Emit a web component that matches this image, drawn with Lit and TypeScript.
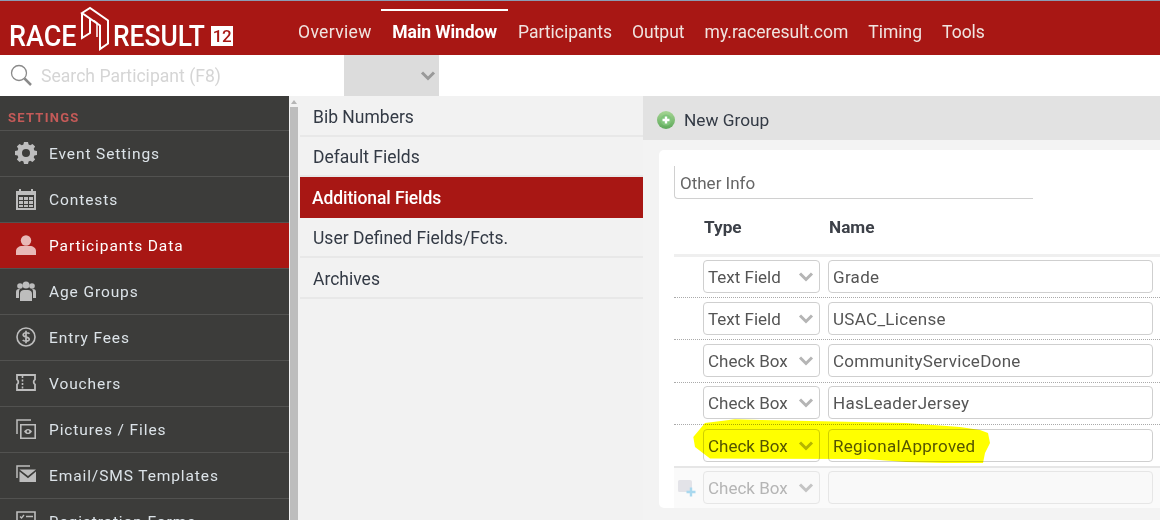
import { LitElement, html, css, svg } from "lit";
import { customElement } from "lit/decorators.js";

const chevron = html`<svg class="chev" width="16" height="10" viewBox="0 0 16 10"><path d="M2 1.500 8 7.500 14 1.500" fill="none" stroke="currentColor" stroke-width="3"/></svg>`;

const icons: Record<string, unknown> = {
  gear: svg`<path fill-rule="evenodd" d="M8 0h4l.6 2.6 1.6.7 2.3-1.4 2.6 2.6-1.4 2.3.7 1.6L21 9v4l-2.6.6-.7 1.6 1.4 2.3-2.6 2.6-2.3-1.4-1.6.7L12 22H8l-.6-2.6-1.6-.7-2.3 1.4-2.6-2.6 1.4-2.3-.7-1.6L-1 13V9l2.6-.6.7-1.6L.9 4.500l2.6-2.6 2.3 1.4 1.6-.7zM10 7a4 4 0 1 0 0 8 4 4 0 0 0 0-8z" transform="translate(0 -1)"/>`,
  cal: svg`<path fill-rule="evenodd" d="M0 2h3V0h2v2h10V0h2v2h3v19H0zM2 6v13h16V6z"/><path d="M3 8h4v3H3zM8 8h4v3H8zM13 8h4v3h-4zM3 12h4v3H3zM8 12h4v3H8zM13 12h4v3h-4zM3 16h4v2H3zM8 16h4v2H8zM13 16h4v2h-4z"/>`,
  user: svg`<circle cx="10" cy="5.500" r="5.200"/><path d="M0 20v-4c0-3 3-5 6-5h8c3 0 6 2 6 5v4z"/>`,
  group: svg`<circle cx="4" cy="5" r="2.800"/><circle cx="16" cy="5" r="2.800"/><circle cx="10" cy="4" r="3.500"/><path d="M0 17v-6c0-2 1-3 3-3h1c-1 1-1 2-1 4v5zM20 17v-6c0-2-1-3-3-3h-1c1 1 1 2 1 4v5zM4 20v-7c0-3 2-4 4-4h4c2 0 4 1 4 4v7z"/>`,
  fee: svg`<circle cx="10" cy="10" r="9" fill="none" stroke="currentColor" stroke-width="1.600"/><path d="M13.500 6.800c-1-1.200-5.800-1.800-6.300.8-.5 3 6.300 1.800 6 4.800-.3 2.400-5.200 2-6.500.6M10 3.800v12.400" fill="none" stroke="currentColor" stroke-width="1.700"/>`,
  voucher: svg`<path d="M1 2h18v4.500a3 3 0 0 0 0 5V17H1v-5.500a3 3 0 0 0 0-5z" fill="none" stroke="currentColor" stroke-width="1.800"/><path d="M6.500 3v14" stroke="currentColor" stroke-width="1.600" stroke-dasharray="2 1.500"/>`,
  pics: svg`<path d="M1 15V1h14" fill="none" stroke="currentColor" stroke-width="1.500"/><path d="M4.800 5.800h14.400v13.400H4.800z" fill="none" stroke="currentColor" stroke-width="1.600"/><path d="M8 12.500c2-3.400 6-3.400 8 0-2 3.400-6 3.400-8 0z"/><circle cx="12" cy="12.500" r="1.200" fill="#3c3c3a"/>`,
  mail: svg`<path d="M1 13V1h13" fill="none" stroke="currentColor" stroke-width="1.500"/><path d="M3.500 4.500h16.500L12 11zM3.500 6.500 12 13.300 20 6.500V17H3.500z"/>`,
  forms: svg`<path d="M1 1h18v18H1z" fill="none" stroke="currentColor" stroke-width="1.600"/><path d="M4 5.500l1.500 1.500L8 4M10 5.500h7M4 11l1.500 1.500L8 9.500M10 11h7" fill="none" stroke="currentColor" stroke-width="1.300"/>`,
};

const sidebar = [
  ["gear", "Event Settings"],
  ["cal", "Contests"],
  ["user", "Participants Data", true],
  ["group", "Age Groups"],
  ["fee", "Entry Fees"],
  ["voucher", "Vouchers"],
  ["pics", "Pictures / Files"],
  ["mail", "Email/SMS Templates"],
  ["forms", "Registration Forms"],
] as [string, string, boolean?][];

const nav = ["Overview", "Main Window", "Participants", "Output", "my.raceresult.com", "Timing", "Tools"];
const mid = ["Bib Numbers", "Default Fields", "Additional Fields", "User Defined Fields/Fcts.", "Archives"];
const rows = [
  ["Text Field", "Grade"],
  ["Text Field", "USAC_License"],
  ["Check Box", "CommunityServiceDone"],
  ["Check Box", "HasLeaderJersey"],
  ["Check Box", "RegionalApproved"],
];

@customElement("app-root")
export class AppRoot extends LitElement {
  static styles = css`
    :host { display: block; width: 1160px; height: 520px; overflow: hidden; position: relative; background: #fff;
      font-family: Roboto, "Noto Sans", sans-serif; }
    * { box-sizing: border-box; }
    .top { height: 55px; background: #a81714; border-top: 1px solid #8b9cb4; display: flex; align-items: stretch; }
    .logo { width: 298px; flex: none; padding-left: 9px; display: flex; align-items: flex-start; color: #fff; }
    .logo .word { font-size: 29px; line-height: 34px; margin-top: 18px; font-weight: 500; display: inline-block; transform-origin: left center; white-space: nowrap; }
    .logo .race { width: 71px; transform: scaleX(.93); }
    .logo .result { width: 98px; margin-left: 3px; transform: scaleX(.91); }
    .logo svg { flex: none; margin: 4px 0 0 0; }
    .logo .badge { flex: none; margin: 25px 0 0 0; width: 22px; height: 20px; background: #fff; color: #a81714; font-size: 17px; font-weight: 500; line-height: 21px; text-align: center; letter-spacing: -.5px; }
    .nav { display: flex; }
    .nav span { display: block; color: #f0e4e0; font-size: 17.500px; line-height: 20px; padding: 11px 10px 0; border-top: 2px solid transparent; margin-top: 8px; white-space: nowrap; height: 44px; }
    .nav span:first-child { padding-left: 0; padding-right: 9.500px; letter-spacing: .35px; }
    .nav span.on { color: #fff; font-weight: 700; border-top-color: #fff; padding-left: 11px; padding-right: 11px; letter-spacing: -.1px; }
    .search { height: 41px; display: flex; }
    .search .box { width: 344px; display: flex; align-items: center; padding: 1px 0 0 10px; color: #d5d5d5; font-size: 17.600px; gap: 8px; }
    .search .box svg { color: #8a8a8a; flex: none; margin-top: -2px; }
    .search .sel { width: 95px; background: #dcdcdc; color: #999; display: flex; justify-content: flex-end; align-items: center; padding-right: 3px; }
    .main { display: flex; height: 424px; }
    .side { width: 289px; flex: none; background: #3c3c3a; overflow: hidden; }
    .side h4 { margin: 0; height: 34.500px; padding: 14px 0 0 8px; font-size: 13px; line-height: 16px; font-weight: 700; letter-spacing: 1.250px; color: #c45a58; border-bottom: 1px solid #525250; }
    .item { height: 46px; display: flex; align-items: center; padding: 1px 0 0 16px; border-bottom: 1px solid #525250; color: #dce3e8; font-size: 15.500px; letter-spacing: .9px; gap: 13px; white-space: nowrap; }
    .item svg { flex: none; color: #bdbdbd; margin-top: -1px; }
    .item.on { background: #a81714; color: #fff; }
    .item.on svg { color: #e8b9b7; }
    .scroll { width: 11px; flex: none; background: #f2f2f2; padding: 0 2px 0 1px; display: flex; flex-direction: column; }
    .scroll .up { height: 11px; display: flex; justify-content: center; align-items: center; }
    .scroll .up i { border: 3px solid transparent; border-top: 0; border-bottom: 4px solid #b5b5b5; }
    .scroll .th { flex: 1; background: #bdbdbd; }
    .mid { width: 343px; flex: none; background: #f2f2f2; }
    .mid div { height: 40.500px; display: flex; align-items: center; padding: 3px 0 0 13px; font-size: 17.500px; color: #333a45; border-bottom: 2px solid #e8e8e8; white-space: nowrap; }
    .mid div.on { background: #a81714; color: #fff; border-bottom: none; padding-left: 12px; padding-top: 1px; font-weight: 500; letter-spacing: -.1px; }
    .right { flex: 1; background: #f3f3f3; min-width: 0; }
    .rh { height: 44px; background: #e2e2e2; display: flex; align-items: center; padding: 3px 0 0 14px; gap: 9px; font-size: 17.300px; color: #333a45; }
    .card { margin: 10px 0 0 16px; background: #fff; border-radius: 5px 0 0 5px; padding: 16px 7px 4px 15px; height: 358px; position: relative; }
    .title { width: 359px; height: 33px; border-left: 1px solid #d0d0d0; border-bottom: 1px solid #d0d0d0; border-radius: 0 0 0 4px; padding-left: 5px; font-size: 17px; line-height: 34px; color: #666; }
    .heads { display: flex; height: 55px; padding: 16px 0 0 30px; font-weight: 700; font-size: 17.200px; color: #3c4048; line-height: 24px; }
    .heads span:first-child { width: 125px; }
    .rule { border-top: 3px solid #efefef; margin-right: -7px; }
    .row { display: flex; height: 42px; padding: 4px 7px 0 29px; gap: 8px; border-bottom: 1px dotted #aaa; margin-right: -7px; }
    .row.r0 { height: 41px; padding-top: 3px; }
    .row.r2 { height: 43px; }
    .row.r3 { padding-top: 3px; }
    .row.r4 { height: 43px; border-bottom: 2px solid #e6e6e6; }
    .select { width: 117px; height: 33px; border: 1px solid #cfcfcf; border-radius: 4px; padding: 0 5px 0 4px; display: flex; align-items: center; justify-content: space-between; font-size: 17px; color: #555; background: #fff; flex: none; }
    .select .chev { color: #b5b5b5; }
    .input { flex: 1; height: 33px; border: 1px solid #cfcfcf; border-radius: 4px; padding-left: 4px; display: flex; align-items: center; font-size: 17px; color: #555; background: #fff; letter-spacing: .3px; }
    .new { display: flex; height: 40px; margin-right: -7px; padding: 3px 7px 0 2px; background: #fafafa; }
    .new svg.add { flex: none; margin: 9px 7px 0 2px; }
    .new .select { background: #f9f9f9; border-color: #e6e6e6; color: #b5b5b5; }
    .new .select .chev { color: #c4c4c4; }
    .new .input { background: #f9f9f9; border-color: #e6e6e6; margin-left: 8px; }
    .mark { position: absolute; left: 693px; top: 419px; mix-blend-mode: multiply; pointer-events: none; }
  `;

  private renderRow(r: string[], i: number) {
    return html`<div class="row r${i}">
      <div class="select">${r[0]}${chevron}</div>
      <div class="input">${r[1]}</div>
    </div>`;
  }

  render() {
    return html`
      <div class="top">
        <div class="logo">
          <span class="word race">RACE</span>
          <svg width="30" height="46" viewBox="0 0 30 46" fill="none" stroke="#fff" stroke-width="2" stroke-linejoin="miter">
            <path d="M2 8 10 3 28 15.500V38.500L20 44V20.500Z"/>
            <path d="M2 8V33L10 28V13"/>
            <path d="M14 15.500 17 18V32" stroke-width="1.500"/>
          </svg>
          <span class="word result">RESULT</span>
          <span class="badge">12</span>
        </div>
        <div class="nav">${nav.map((n) => html`<span class=${n === "Main Window" ? "on" : ""}>${n}</span>`)}</div>
      </div>
      <div class="search">
        <div class="box">
          <svg width="23" height="23" viewBox="0 0 23 23" fill="none" stroke="currentColor"><circle cx="9" cy="9" r="7.500" stroke-width="1.300"/><path d="M14.500 14.500 21 21" stroke-width="2.500"/></svg>
          <span>Search Participant (F8)</span>
        </div>
        <div class="sel">${chevron}</div>
      </div>
      <div class="main">
        <div class="side">
          <h4>SETTINGS</h4>
          ${sidebar.map(([ic, label, on]) => html`<div class="item ${on ? "on" : ""}">
            <svg width="20" height="20" viewBox="0 0 20 20" fill="currentColor" overflow="visible">${icons[ic]}</svg>${label}
          </div>`)}
        </div>
        <div class="scroll"><div class="up"><i></i></div><div class="th"></div></div>
        <div class="mid">${mid.map((m) => html`<div class=${m === "Additional Fields" ? "on" : ""}>${m}</div>`)}</div>
        <div class="right">
          <div class="rh">
            <svg width="18" height="18" viewBox="0 0 18 18"><defs><linearGradient id="g" x1="0" y1="0" x2="0" y2="1"><stop offset="0" stop-color="#a6d694"/><stop offset="1" stop-color="#5da85a"/></linearGradient></defs><circle cx="9" cy="9" r="9" fill="url(#g)"/><circle cx="9" cy="9" r="5.500" fill="#7fc47a"/><path d="M9 5.500v7M5.500 9h7" stroke="#fff" stroke-width="2.400"/></svg>
            New Group
          </div>
          <div class="card">
            <div class="title">Other Info</div>
            <div class="heads"><span>Type</span><span>Name</span></div>
            <div class="rule"></div>
            ${rows.map((r, i) => this.renderRow(r, i))}
            <div class="new">
              <svg class="add" width="18" height="18" viewBox="0 0 18 18"><path d="M0 1.500A1.500 1.500 0 0 1 1.500 0H12a2 2 0 0 1 2 2v10H1.500A1.500 1.500 0 0 1 0 10.500z" fill="#e3e3e8"/><path d="M13 7.500v9M8.500 12h9" stroke="#a9d8ee" stroke-width="2.400"/></svg>
              <div class="select">Check Box${chevron}</div>
              <div class="input"></div>
            </div>
          </div>
        </div>
      </div>
      <svg class="mark" width="300" height="46" viewBox="0 0 300 46"><path d="M0.300 18 2 28 17 39.500 173 40 213 43 250 44 290 44 292 34 297 24 295 14 287 11 267 8 213 4 67 1 42 .3 12 4z" fill="#ffff00"/></svg>
    `;
  }
}
